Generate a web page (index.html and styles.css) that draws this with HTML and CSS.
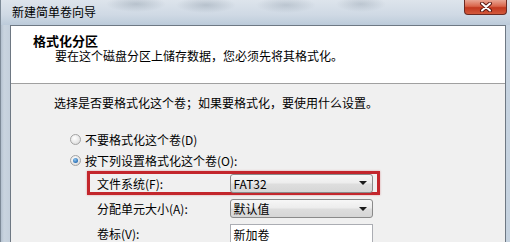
FILE: index.html
```html
<!DOCTYPE html>
<html lang="zh">
<head>
    <meta charset="UTF-8">
    <title>新建简单卷向导</title>
    <link rel="stylesheet" href="styles.css">
</head>
<body>
    <div class="window">
        <!-- 标题栏 -->
        <div class="titlebar">
            <span class="title">新建简单卷向导</span>
            <div class="close">
                <svg width="14" height="10" viewBox="0 0 14 10">
                    <path d="M3 1.5 L11 8.5 M11 1.5 L3 8.5" stroke="#5a1a14" stroke-width="4" stroke-linecap="round"/>
                    <path d="M3 1.5 L11 8.5 M11 1.5 L3 8.5" stroke="#fff" stroke-width="2" stroke-linecap="round"/>
                </svg>
            </div>
        </div>

        <div class="client">
            <!-- 页头 -->
            <div class="header">
                <div class="header-title">格式化分区</div>
                <div class="header-sub">要在这个磁盘分区上储存数据，您必须先将其格式化。</div>
            </div>

            <!-- 内容 -->
            <div class="content">
                <p class="intro">选择是否要格式化这个卷；如果要格式化，要使用什么设置。</p>

                <div class="radio-row">
                    <span class="radio"></span>
                    <span>不要格式化这个卷(D)</span>
                </div>
                <div class="radio-row">
                    <span class="radio checked"></span>
                    <span>按下列设置格式化这个卷(O):</span>
                </div>

                <div class="options">
                    <div class="opt-row highlight">
                        <span class="opt-label">文件系统(F):</span>
                        <div class="combo"><span>FAT32</span><i class="arrow"></i></div>
                    </div>
                    <div class="opt-row">
                        <span class="opt-label">分配单元大小(A):</span>
                        <div class="combo"><span>默认值</span><i class="arrow"></i></div>
                    </div>
                    <div class="opt-row">
                        <span class="opt-label">卷标(V):</span>
                        <div class="textbox">新加卷</div>
                    </div>
                </div>
            </div>
        </div>
    </div>
</body>
</html>
```

FILE: styles.css
```css
body {
    margin: 0;
    width: 510px;
    height: 242px;
    overflow: hidden;
    font-family: "Noto Sans CJK SC", "Liberation Sans", sans-serif;
    font-size: 12px;
    color: #000;
}

.window {
    height: 100%;
    background: linear-gradient(90deg, #b4c1cf 0px, #c9d4df 3px, #c3cfdb 10px, #d3dde7 60%, #c6d3e0 100%);
    border-left: 1px solid #7d8a97;
    box-sizing: border-box;
}

.titlebar {
    height: 25px;
    display: flex;
    justify-content: space-between;
    align-items: flex-start;
    background:
        radial-gradient(ellipse 30px 8px at 135px 4px, rgba(120, 135, 150, 0.35), transparent),
        radial-gradient(ellipse 30px 8px at 205px 5px, rgba(120, 135, 150, 0.35), transparent),
        radial-gradient(ellipse 30px 8px at 285px 5px, rgba(120, 135, 150, 0.3), transparent),
        radial-gradient(ellipse 25px 8px at 360px 4px, rgba(120, 135, 150, 0.3), transparent),
        linear-gradient(180deg, #dde4ec 0%, #cfd9e4 60%, #bccbda 100%);
}
.title {
    margin-left: 11px;
    line-height: 24px;
    font-size: 12px;
}
.close {
    width: 43px;
    height: 15px;
    margin-right: 3px;
    border: 1px solid #6b2a22;
    border-top: none;
    border-radius: 0 0 4px 4px;
    background: linear-gradient(180deg, #e9a593 0%, #d9654b 45%, #c2381f 55%, #d35a3c 100%);
    display: flex;
    align-items: center;
    justify-content: center;
    box-sizing: border-box;
}

.client {
    margin: 0 4px 0 9px;
    height: 217px;
    border: 1px solid #6e7883;
    border-bottom: none;
    background: #f0f0f0;
}

.header {
    height: 58px;
    background: #fff;
    border-bottom: 1px solid #a0a0a0;
    padding: 8px 0 0 22px;
    box-sizing: border-box;
}
.header-title {
    font-size: 13px;
    font-weight: bold;
    line-height: 14px;
}
.header-sub {
    margin-top: 2px;
    padding-left: 22px;
    line-height: 12px;
}

.content {
    padding: 12px 0 0 43px;
}
.intro {
    margin: 0 0 19px 0;
    line-height: 14px;
}

.radio-row {
    height: 21px;
    display: flex;
    align-items: center;
    gap: 4px;
    padding-left: 16px;
}
.radio {
    width: 11px;
    height: 11px;
    border-radius: 50%;
    border: 1px solid #a3a3a3;
    background: radial-gradient(circle at 40% 35%, #ffffff 0%, #e6e6e6 60%, #cfcfcf 100%);
    box-sizing: border-box;
    position: relative;
}
.radio.checked::after {
    content: "";
    position: absolute;
    left: 2px;
    top: 2px;
    width: 5px;
    height: 5px;
    border-radius: 50%;
    background: radial-gradient(circle at 40% 35%, #8fc7ef 0%, #2a6fb5 70%, #1d4f8a 100%);
}

.options {
    margin-left: 33px;
    width: 293px;
}
.opt-row {
    height: 25px;
    display: flex;
    align-items: center;
    border: 3px solid transparent;
    box-sizing: border-box;
    padding: 0 4px 0 7px;
}
.opt-row.highlight {
    height: 24px;
    margin-bottom: 1px;
    border-color: #c3262c;
    box-shadow: 0 0 2px rgba(195, 38, 44, 0.4);
}
.opt-label {
    width: 133px;
}
.combo {
    width: 144px;
    height: 19px;
    border: 1px solid #8a8a8a;
    border-radius: 3px;
    background: linear-gradient(180deg, #f7f7f7 0%, #ececec 48%, #dedede 52%, #d6d6d6 100%);
    box-sizing: border-box;
    display: flex;
    align-items: center;
    justify-content: space-between;
    padding: 0 5px 0 3px;
    font-size: 12px;
}
.arrow {
    width: 0;
    height: 0;
    border-left: 4px solid transparent;
    border-right: 4px solid transparent;
    border-top: 4px solid #1a1a1a;
}
.textbox {
    width: 144px;
    height: 21px;
    border: 1px solid #abadb3;
    border-bottom: none;
    background: #fff;
    box-sizing: border-box;
    padding: 1px 0 0 3px;
    align-self: flex-start;
}
```
